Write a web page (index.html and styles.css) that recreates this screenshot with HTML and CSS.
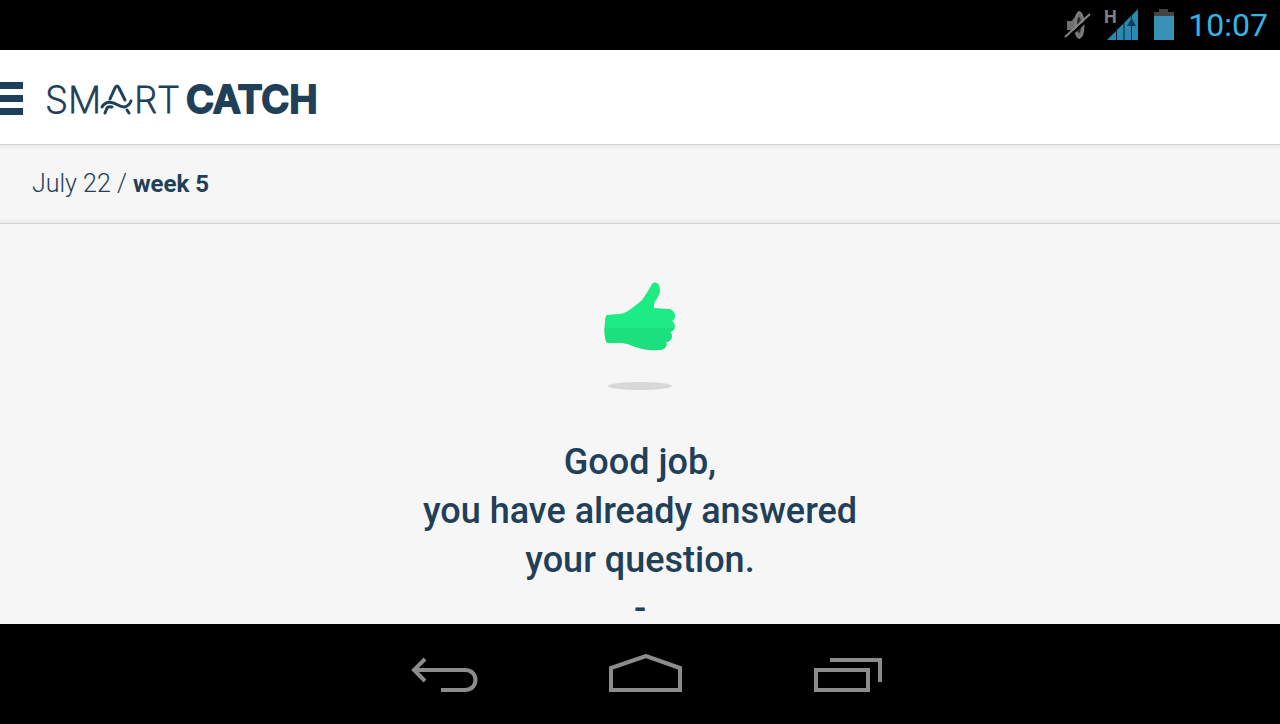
FILE: index.html
```html
<!DOCTYPE html>
<html lang="en">
<head>
<meta charset="utf-8">
<title>SmartCatch</title>
<link rel="stylesheet" href="styles.css">
</head>
<body>
<div class="status">
  <svg class="status-icon" width="27" height="30" viewBox="0 0 27 30" aria-label="Muted">
    <path d="M3 11h4c3-1 4-6 9-9v26c-5-3-6-7-9-8H3z" fill="#6f6f6f"/>
    <path d="M15 2C21 4 21 26 15 28C10 25 10 5 15 2z" fill="#6f6f6f" stroke="#808080" stroke-width="2"/>
    <ellipse cx="15" cy="15" rx="2" ry="8" fill="#2a2a2a"/>
    <path d="M2 29L28 6" stroke="#000" stroke-width="3"/>
    <path d="M1 27L26 4" stroke="#858585" stroke-width="2"/>
  </svg>
  <svg class="status-icon" width="36" height="32" viewBox="0 0 36 32" aria-label="Signal">
    <text x="0" y="14" class="signal-type">H</text>
    <path d="M3 31L34 0V31z" fill="#288ab0"/>
    <path d="M12.500 20v12M20 12v20M27.500 6v26" stroke="#08222e" stroke-width="1"/>
    <path d="M27.500 9l4.500 8h-9z" fill="#0f3f55"/>
  </svg>
  <svg class="status-icon" width="22" height="32" viewBox="0 0 22 32" aria-label="Battery">
    <path d="M1 3h5V0h9v3h6v4H1z" fill="#444"/>
    <path d="M1 7h20v24H1z" fill="#3992b6"/>
  </svg>
  <time class="clock">10:07</time>
</div>

<header class="header">
  <button class="menu" aria-label="Menu"><span class="bar"></span><span class="bar"></span><span class="bar"></span></button>
  <a class="logo" href="#" aria-label="SmartCatch">
    <svg width="290" height="50" viewBox="0 -7 290 50">
      <text class="logo-thin" x="0" y="33">SM</text>
      <g class="logo-mark">
        <path d="M65 19L70 8Q72 4 74 8L80 20"/>
        <path d="M57 27C61 20 68 22 73 25S83 28 86 21"/>
        <path d="M60 33L62 28Q63 26 67 27M82 30L84 33"/>
      </g>
      <text class="logo-thin" x="89" y="33">RT</text>
      <text class="logo-bold" x="141" y="33">CATCH</text>
    </svg>
  </a>
</header>

<div class="datebar"><p class="date">July 22 / <strong class="week">week 5</strong></p></div>

<main class="content">
  <svg class="thumb" width="72" height="110" viewBox="0 0 72 110" aria-hidden="true">
    <defs><clipPath id="lower"><path d="M0 46h72v30H0z"/></clipPath></defs>
    <path id="hand" fill="#1deb84" d="M3 33C10 32 18 33 24 29C29 25 34 22 38 18C42 13 45 7 48 2C50-1 56 0 56 8C56 15 49 19 50 26L65 27C72 28 73 37 68 39C73 42 71 49 66 50C70 54 67 60 62 60C64 65 60 68 54 68C43 69 30 65 24 62C17 60 10 61 4 61Q2 61 1 55Q0 47 1 40Q1 34 3 33z"/>
    <use href="#hand" clip-path="url(#lower)" class="hand-shade"/>
    <ellipse cx="36" cy="104" rx="32" ry="4" fill="#d8d8d8"/>
  </svg>
  <p class="message">Good job,<br>you have already answered<br>your question.<br>-</p>
</main>

<nav class="nav">
  <button class="nav-button" aria-label="Back"><svg width="74" height="40" viewBox="0 0 74 40"><path d="M6 16H58C72 16 72 36 58 36H34M18 5L7 16L18 27"/></svg></button>
  <button class="nav-button" aria-label="Home"><svg width="74" height="40" viewBox="0 0 74 40"><path d="M2 36V14L37 2L71 14V36z"/></svg></button>
  <button class="nav-button" aria-label="Recent apps"><svg width="74" height="40" viewBox="0 0 74 40"><path d="M5 16H57V36H5zM19 6H69V28"/></svg></button>
</nav>
</body>
</html>
```
FILE: styles.css
```css
* { box-sizing: border-box; }

body {
  margin: 0;
  height: 100vh;
  display: flex;
  flex-direction: column;
  overflow: hidden;
  background: #f6f6f6;
  color: #1f4058;
  font-family: Roboto, "Liberation Sans", sans-serif;
}

button { padding: 0; border: 0; background: none; }
svg { display: block; }

.status {
  flex: none;
  display: flex;
  align-items: center;
  justify-content: flex-end;
  gap: 13px;
  height: 50px;
  padding-right: 12px;
  background: #000;
}

.status-icon { overflow: visible; }
.signal-type { font: bold 18px Roboto, sans-serif; fill: #808080; }
.clock { font-size: 32px; color: #33b5e5; }

.header {
  flex: none;
  display: flex;
  align-items: center;
  gap: 22px;
  height: 95px;
  padding-top: 2px;
  background: #fff;
  border-bottom: 1px solid #d2d2d2;
}

.menu { display: flex; flex-direction: column; gap: 6px; width: 23px; }
.bar { width: 100%; height: 7px; background: #1f4058; }

.logo-thin,
.logo-bold {
  font: 300 37px Inter, sans-serif;
  fill: #1f4058;
  stroke: #1f4058;
  stroke-width: 1px;
  stroke-linejoin: round;
}
.logo-thin { font-weight: 200; }
.logo-bold { font-size: 38px; font-weight: 600; stroke-width: 2px; }
.logo-mark { fill: none; stroke: #1f4058; stroke-width: 3px; stroke-linecap: round; }

.datebar {
  flex: none;
  display: flex;
  align-items: center;
  height: 79px;
  padding: 0 32px 2px;
  border-bottom: 1px solid #d2d2d2;
  background: linear-gradient(#e9e9e9, #f6f6f6 5px, #f6f6f6 73px, #e9e9e9);
}
.date { margin: 0; font-size: 25px; font-weight: 300; }
.week { font-size: 24px; font-weight: 700; }

.content {
  flex: 1;
  min-height: 0;
  display: flex;
  flex-direction: column;
  align-items: center;
  gap: 46px;
  padding-top: 58px;
  overflow: hidden;
}
.thumb { flex: none; }
.hand-shade { filter: brightness(0.95); }
.message {
  margin: 0;
  font-size: 36px;
  font-weight: 500;
  line-height: 49px;
  text-align: center;
}

.nav {
  flex: none;
  display: flex;
  align-items: center;
  justify-content: center;
  gap: 128px;
  height: 100px;
  padding-left: 12px;
  background: #000;
}
.nav-button svg { fill: none; stroke: #8c8c8c; stroke-width: 4px; }
```
